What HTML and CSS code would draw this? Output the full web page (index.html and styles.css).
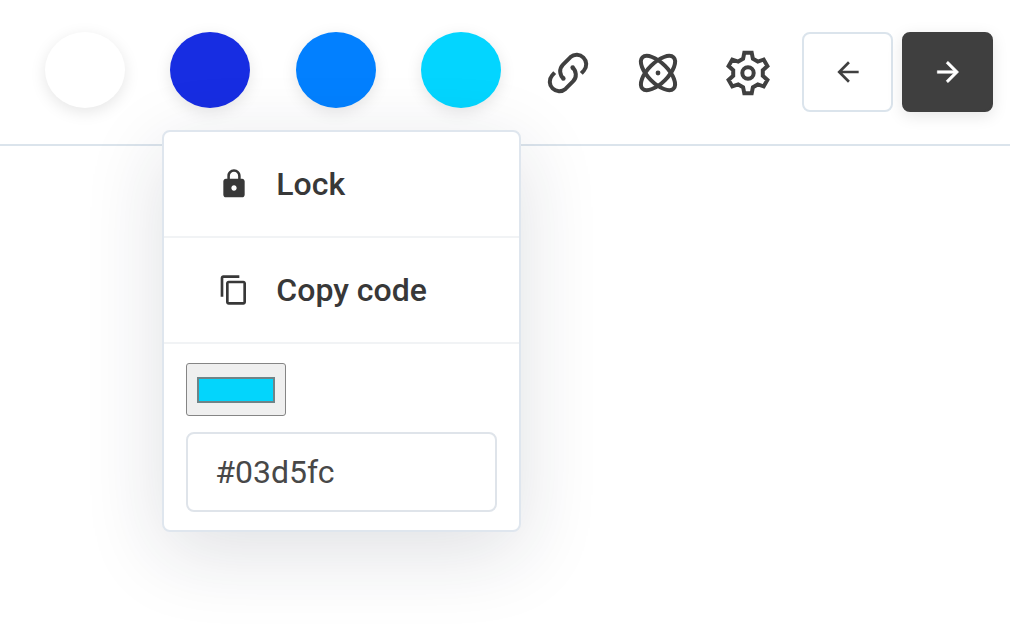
FILE: index.html
```html
<!DOCTYPE html>
<html lang="en">
<head>
<meta charset="utf-8">
<meta name="viewport" content="width=device-width, initial-scale=1">
<title>Palette</title>
<link rel="stylesheet" href="styles.css">
</head>
<body>
<header class="toolbar">
  <div class="swatches">
    <button class="swatch swatch-white" aria-label="White"></button>
    <div class="swatch-wrap">
      <button class="swatch swatch-navy" aria-label="Navy" aria-expanded="true"></button>
      <div class="menu">
        <button class="menu-item">
          <svg class="glyph" viewBox="0 0 24 24" aria-hidden="true"><path d="M18 8h-1V6c0-2.760-2.240-5-5-5S7 3.240 7 6v2H6c-1.100 0-2 .9-2 2v10c0 1.100.9 2 2 2h12c1.100 0 2-.9 2-2V10c0-1.100-.9-2-2-2zm-6 9c-1.100 0-2-.9-2-2s.9-2 2-2 2 .9 2 2-.9 2-2 2zm3.100-9H8.900V6c0-1.710 1.390-3.100 3.100-3.100s3.100 1.390 3.100 3.100v2z"/></svg>
          Lock
        </button>
        <button class="menu-item">
          <svg class="glyph" viewBox="0 0 24 24" aria-hidden="true"><path d="M16 1H4c-1.100 0-2 .9-2 2v14h2V3h12V1zm3 4H8c-1.100 0-2 .9-2 2v14c0 1.100.9 2 2 2h11c1.100 0 2-.9 2-2V7c0-1.100-.9-2-2-2zm0 16H8V7h11v14z"/></svg>
          Copy code
        </button>
        <div class="menu-fields">
          <input class="picker" type="color" value="#03d5fc" aria-label="Color">
          <input class="hex" type="text" value="#03d5fc" aria-label="Hex code">
        </div>
      </div>
    </div>
    <button class="swatch swatch-blue" aria-label="Blue"></button>
    <button class="swatch swatch-cyan" aria-label="Cyan"></button>
  </div>
  <div class="tools">
    <button class="tool" aria-label="Link">
      <svg class="tool-icon" viewBox="-22 -22 44 44" aria-hidden="true">
        <path d="M-4.100 5.900A9.500 9.500 0 0 1-5-8.400L2.500-15.900A9.500 9.500 0 0 1 15.900-2.500L13.300.3"/>
        <path d="M4.100-5.900A9.500 9.500 0 0 1 5 8.400L-2.500 15.900A9.500 9.500 0 0 1-15.900 2.500L-13.300-.3"/>
        <circle class="dot" cx="-4.600" cy="5.500" r="2.200"/>
        <circle class="dot" cx="4.600" cy="-5.500" r="2.200"/>
      </svg>
    </button>
    <button class="tool" aria-label="Harmony">
      <svg class="tool-icon" viewBox="-22 -22 44 44" aria-hidden="true">
        <ellipse rx="22" ry="10" transform="rotate(45)"/>
        <ellipse rx="22" ry="10" transform="rotate(-45)"/>
        <circle class="dot" r="2.400"/>
      </svg>
    </button>
    <button class="tool" aria-label="Settings">
      <svg class="tool-icon" viewBox="-22 -22 44 44" aria-hidden="true">
        <path d="M-3.700-20.300H3.700L4.900-14.200L9.800-11.400L15.700-13.400L19.400-7L14.800-2.800V2.800L19.400 7L15.700 13.400L9.800 11.400L4.900 14.200L3.700 20.300H-3.700L-4.900 14.200L-9.800 11.400L-15.700 13.400L-19.400 7L-14.800 2.800V-2.800L-19.400-7L-15.700-13.400L-9.800-11.400L-4.900-14.200Z"/>
        <circle r="5.700"/>
      </svg>
    </button>
  </div>
  <div class="history">
    <button class="step" aria-label="Previous"><svg class="glyph" viewBox="0 0 24 24" aria-hidden="true"><path d="M20 11H7.830l5.590-5.590L12 4l-8 8 8 8 1.410-1.410L7.830 13H20v-2z"/></svg></button>
    <button class="step step-dark" aria-label="Next"><svg class="glyph" viewBox="0 0 24 24" aria-hidden="true"><path d="M12 4l-1.410 1.410L16.170 11H4v2h12.170l-5.580 5.590L12 20l8-8-8-8z"/></svg></button>
  </div>
</header>
</body>
</html>
```
FILE: styles.css
```css
* { box-sizing: border-box; }

body {
  min-height: 100vh;
  margin: 0;
  background: #fff;
  color: #383838;
  font-family: Roboto, "Liberation Sans", sans-serif;
}

button {
  padding: 0;
  border: 0;
  background: none;
  color: inherit;
  font: inherit;
  cursor: pointer;
}

svg { display: block; }

.toolbar {
  display: flex;
  align-items: flex-start;
  padding: 32px 17px 32px 45px;
  border-bottom: 2px solid #dbe4ec;
}

.swatches {
  display: flex;
  flex: 1;
  justify-content: space-between;
  margin-right: 45px;
}

.swatch-wrap { position: relative; }

.swatch {
  display: block;
  width: 80px;
  height: 76px;
  border-radius: 50%;
  box-shadow: 0 4px 16px rgba(0, 0, 0, 0.1);
}

.swatch-white { background: #fff; }
.swatch-navy { background: #172de2; }
.swatch-blue { background: #0280ff; }
.swatch-cyan { background: #03d5ff; }

.tools {
  display: flex;
  gap: 46px;
  margin-right: 32px;
  padding-top: 19px;
}

.tool-icon {
  width: 44px;
  height: 44px;
  overflow: visible;
  fill: none;
  stroke: #404040;
  stroke-width: 4;
}

.tool-icon .dot {
  fill: #404040;
  stroke: none;
}

.history {
  display: flex;
  gap: 9px;
}

.step {
  display: grid;
  place-items: center;
  width: 91px;
  height: 80px;
  border: 2px solid #dbe4ec;
  border-radius: 8px;
  color: #404040;
}

.step-dark {
  border-color: #3f3f3f;
  background: #3f3f3f;
  color: #fff;
  box-shadow: 0 4px 16px rgba(0, 0, 0, 0.1);
}

.step-dark .glyph {
  stroke: #fff;
  stroke-width: 0.4;
}

.glyph {
  width: 32px;
  height: 32px;
  fill: currentColor;
}

.menu {
  position: absolute;
  top: 98px;
  left: -8px;
  z-index: 1;
  width: 359px;
  border: 2px solid #dfe6ee;
  border-radius: 8px;
  background: #fff;
  box-shadow: 0 20px 80px rgba(30, 34, 60, 0.14);
}

.menu-item {
  display: flex;
  align-items: center;
  gap: 26px;
  width: 100%;
  height: 106px;
  padding: 0 54px;
  border-bottom: 2px solid #f1f3f5;
  font-size: 32px;
  font-weight: 500;
}

.menu-fields {
  display: flex;
  flex-direction: column;
  align-items: flex-start;
  gap: 16px;
  padding: 19px 22px 18px;
}

.picker {
  width: 100px;
  height: 53px;
  padding: 13px 10px 12px;
  border: 1px solid #858585;
  border-radius: 3px;
  background: #efefef;
  appearance: none;
}

.picker::-webkit-color-swatch-wrapper { padding: 0; }

.picker::-webkit-color-swatch {
  border: 2px solid #6f8488;
  border-radius: 0;
}

.hex {
  width: 100%;
  height: 80px;
  padding: 0 27px;
  border: 2px solid #dfe4ea;
  border-radius: 8px;
  background: #fff;
  color: #484848;
  font: 32px Roboto, "Liberation Sans", sans-serif;
}
```
